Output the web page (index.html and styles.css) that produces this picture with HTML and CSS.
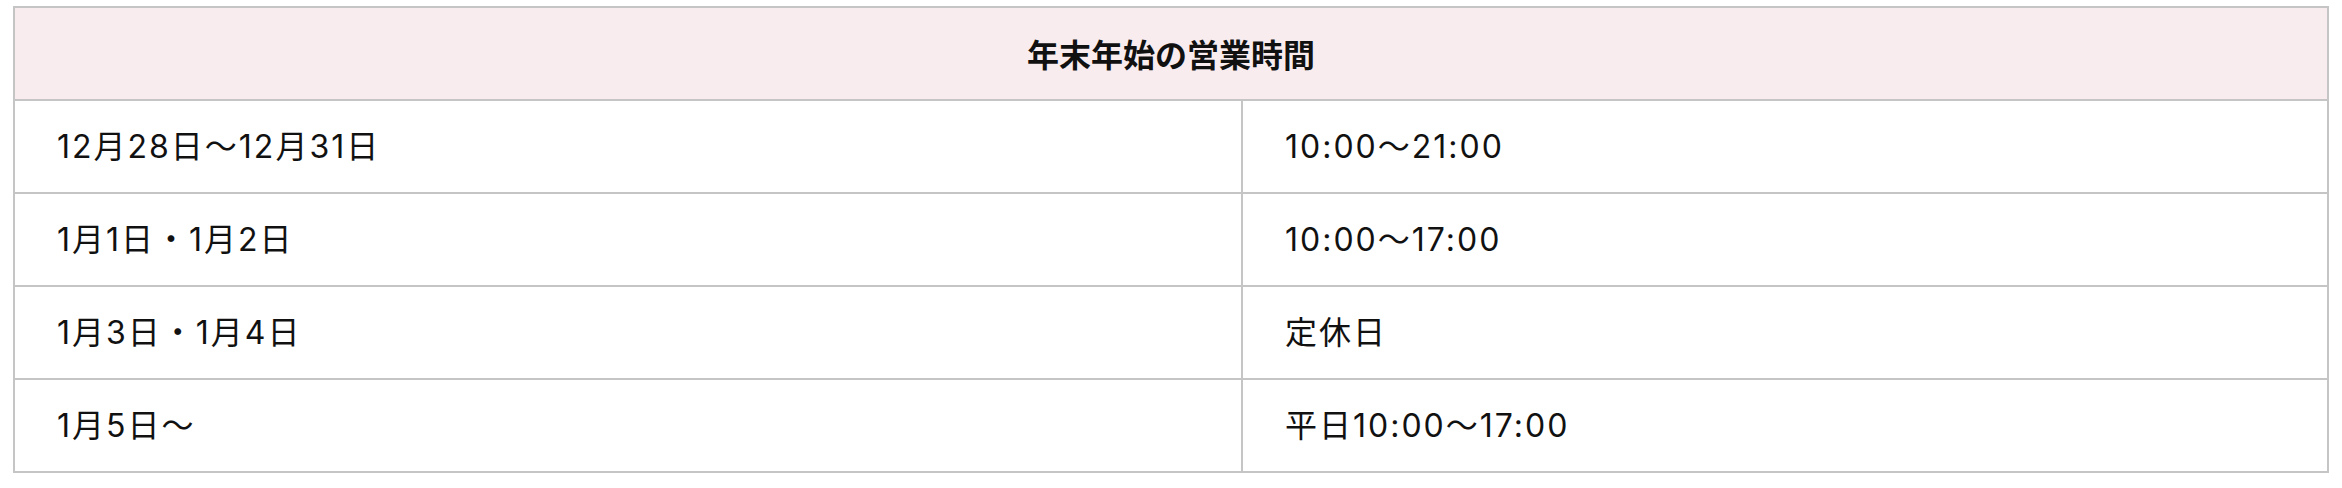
FILE: index.html
```html
<!DOCTYPE html>
<html lang="ja">
<head>
<meta charset="utf-8">
<title>年末年始の営業時間</title>
<link rel="stylesheet" href="styles.css">
</head>
<body>
<div class="wrap">
  <table class="hours">
    <colgroup>
      <col class="col-date">
      <col class="col-time">
    </colgroup>
    <thead>
      <tr><th colspan="2">年末年始の営業時間</th></tr>
    </thead>
    <tbody>
      <tr><td>12月28日〜12月31日</td><td>10:00〜21:00</td></tr>
      <tr><td>1月1日・1月2日</td><td>10:00〜17:00</td></tr>
      <tr><td>1月3日・1月4日</td><td>定休日</td></tr>
      <tr><td>1月5日〜</td><td>平日10:00〜17:00</td></tr>
    </tbody>
  </table>
</div>
</body>
</html>
```
FILE: styles.css
```css
html, body {
  margin: 0;
  padding: 0;
  background: #ffffff;
}
body {
  font-family: Inter, "Noto Sans CJK JP", sans-serif;
  color: #111111;
}
.wrap {
  padding: 6px 13px 0;
}
.hours {
  width: 2316px;
  table-layout: fixed;
  border-collapse: separate;
  border-spacing: 0;
  border-right: 2px solid #c5c5c5;
  border-bottom: 2px solid #c5c5c5;
  box-sizing: border-box;
}
.col-date {
  width: 1228px;
}
.hours th,
.hours td {
  box-sizing: border-box;
  border-top: 2px solid #c5c5c5;
  border-left: 2px solid #c5c5c5;
  padding: 0 42px;
  height: 93px;
  line-height: 91px;
  font-size: 32px;
  text-align: left;
  vertical-align: middle;
  white-space: nowrap;
}
.hours td {
  font-weight: 400;
  letter-spacing: 2px;
}
.hours th {
  background: #f8ecef;
  font-family: "Noto Sans CJK JP", sans-serif;
  font-weight: 700;
  text-align: center;
}
```
